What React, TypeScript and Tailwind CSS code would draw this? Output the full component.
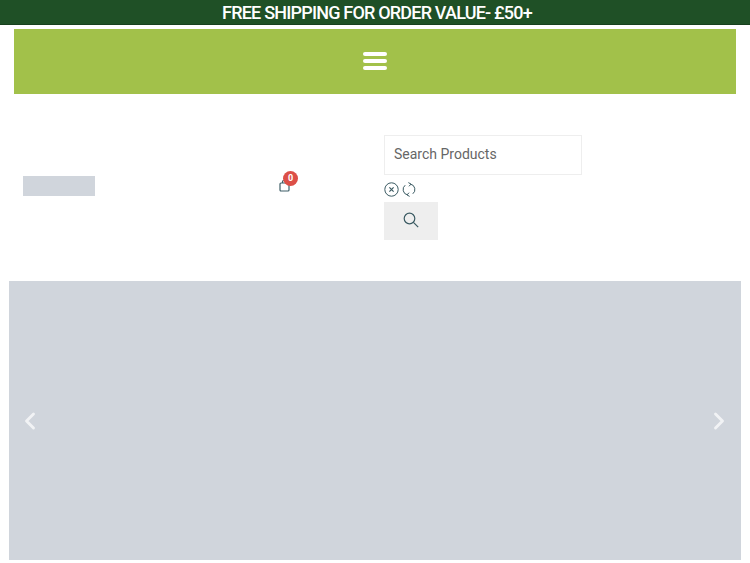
import { ChevronLeft, ChevronRight } from 'lucide-react';

function Hamburger() {
  return (
    <div className="flex flex-col gap-[3px] mt-[-2px]">
      <div className="w-6 h-1 rounded-full bg-white" />
      <div className="w-6 h-1 rounded-full bg-white" />
      <div className="w-6 h-1 rounded-full bg-white" />
    </div>
  );
}

function CartIcon() {
  return (
    <div className="relative w-[11px] h-[11px] mt-[-12px]">
      <svg width="11" height="12" viewBox="0 0 11 12" fill="none" stroke="#3f5f68" strokeWidth="1.2">
        <rect x="1" y="3" width="9" height="8" rx="1" />
        <path d="M3.5 3V2a2 2 0 0 1 4 0v1" />
      </svg>
      <span className="absolute left-[4px] top-[-9px] w-[15px] h-[15px] rounded-full bg-[#dc4f47] text-white text-[9px] font-bold leading-[15px] text-center">
        0
      </span>
    </div>
  );
}

function ClearIcon() {
  return (
    <svg width="15" height="15" viewBox="0 0 15 15" fill="none" stroke="#3a5a62" strokeWidth="1">
      <circle cx="7.5" cy="7.5" r="6.7" />
      <path d="M5.4 5.4l4.2 4.2M9.6 5.4l-4.2 4.2" strokeWidth="1.2" />
    </svg>
  );
}

function SpinnerIcon() {
  return (
    <svg width="14" height="15" viewBox="0 0 14 15" fill="none" stroke="#3a5a62" strokeWidth="1">
      <path d="M8.5 2.1A5.5 5.5 0 0 1 10.8 11.8" />
      <path d="M5.5 12.9A5.5 5.5 0 0 1 3.2 3.2" />
      <path d="M6.4 0.6l2.6 1.5-2 2.2" />
      <path d="M7.6 14.4l-2.6-1.5 2-2.2" />
    </svg>
  );
}

function SearchIcon() {
  return (
    <svg width="16" height="16" viewBox="0 0 16 16" fill="none" stroke="#3a5a62" strokeWidth="1.2" className="mt-[-3px]">
      <circle cx="6.5" cy="6.5" r="5.3" />
      <path d="M10.4 10.4l4.8 4.8" />
    </svg>
  );
}

export default function App() {
  return (
    <div className="w-[750px] h-[563px] overflow-hidden bg-white font-['Roboto',sans-serif]">
      <div className="h-[25px] bg-[#1f5026] border-b border-[#17401d] flex items-center justify-center text-white text-[18px] font-medium leading-none tracking-[-0.8px] pt-[2px] pl-1">
        FREE SHIPPING FOR ORDER VALUE- £50+
      </div>

      <nav className="mx-[14px] mt-1 h-[65px] bg-[#a2c14a] flex items-center justify-center">
        <Hamburger />
      </nav>

      <header className="flex items-start h-[187px] pt-[41px]">
        <div className="ml-[23px] mt-[41px] w-[72px] h-5 bg-[#d0d5dc]" />
        <div className="ml-[184px] mt-[57px]">
          <CartIcon />
        </div>
        <div className="ml-[94px]">
          <div className="w-[198px] h-10 border border-[#eeeeee] flex items-center px-[9px] pb-[2px] text-[14px] text-[#666666]">
            Search Products
          </div>
          <div className="flex items-center gap-[3px] mt-[6px] h-4">
            <ClearIcon />
            <SpinnerIcon />
          </div>
          <div className="mt-[5px] w-[54px] h-[38px] bg-[#eeeeee] flex items-center justify-center">
            <SearchIcon />
          </div>
        </div>
      </header>

      <section className="relative mx-[9px] w-[732px] h-[279px] bg-[#d0d5dc]">
        <ChevronLeft size={28} strokeWidth={2.5} className="absolute left-[7px] top-[126px] text-white/70" />
        <ChevronRight size={28} strokeWidth={2.5} className="absolute right-[8px] top-[126px] text-white/70" />
      </section>
    </div>
  );
}
